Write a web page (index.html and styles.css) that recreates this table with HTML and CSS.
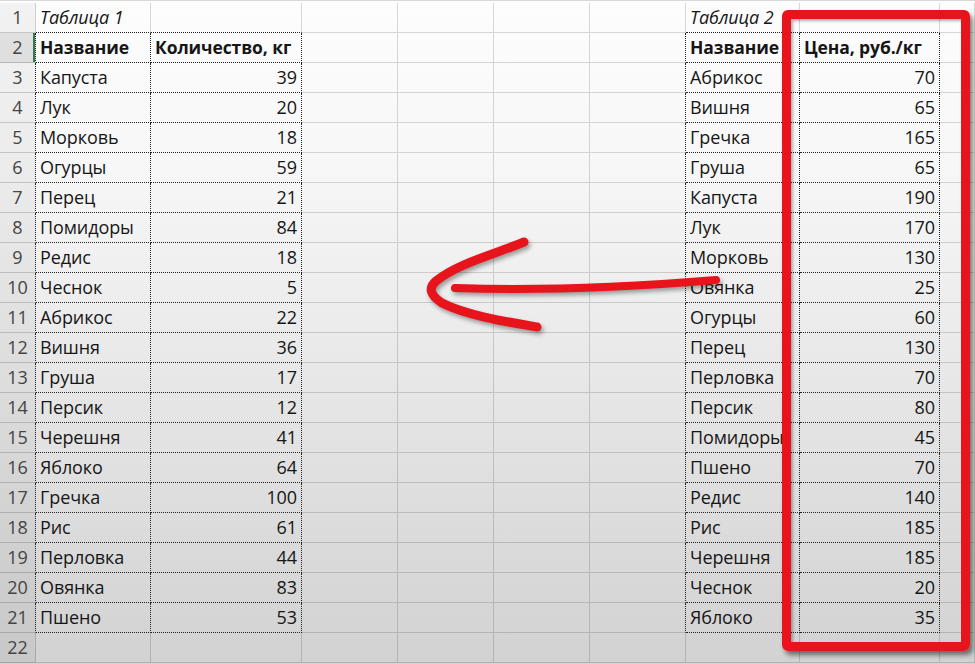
FILE: index.html
```html
<!DOCTYPE html>
<html lang="ru">
<head>
<meta charset="utf-8">
<title>Таблица</title>
<link rel="stylesheet" href="styles.css">
</head>
<body>
<div class="sheet">
  <div class="row r1"><div class="h">1</div><div class="i">Таблица 1</div><div></div><div></div><div></div><div></div><div></div><div class="i">Таблица 2</div><div></div><div></div></div>
  <div class="row tb r2"><div class="h">2</div><div class="b">Название</div><div class="b">Количество, кг</div><div></div><div></div><div></div><div></div><div class="b">Название</div><div class="b">Цена, руб./кг</div><div></div></div>
  <div class="row tb"><div class="h">3</div><div>Капуста</div><div class="n">39</div><div></div><div></div><div></div><div></div><div>Абрикос</div><div class="n">70</div><div></div></div>
  <div class="row tb"><div class="h">4</div><div>Лук</div><div class="n">20</div><div></div><div></div><div></div><div></div><div>Вишня</div><div class="n">65</div><div></div></div>
  <div class="row tb"><div class="h">5</div><div>Морковь</div><div class="n">18</div><div></div><div></div><div></div><div></div><div>Гречка</div><div class="n">165</div><div></div></div>
  <div class="row tb"><div class="h">6</div><div>Огурцы</div><div class="n">59</div><div></div><div></div><div></div><div></div><div>Груша</div><div class="n">65</div><div></div></div>
  <div class="row tb"><div class="h">7</div><div>Перец</div><div class="n">21</div><div></div><div></div><div></div><div></div><div>Капуста</div><div class="n">190</div><div></div></div>
  <div class="row tb"><div class="h">8</div><div>Помидоры</div><div class="n">84</div><div></div><div></div><div></div><div></div><div>Лук</div><div class="n">170</div><div></div></div>
  <div class="row tb"><div class="h">9</div><div>Редис</div><div class="n">18</div><div></div><div></div><div></div><div></div><div>Морковь</div><div class="n">130</div><div></div></div>
  <div class="row tb"><div class="h">10</div><div>Чеснок</div><div class="n">5</div><div></div><div></div><div></div><div></div><div>Овянка</div><div class="n">25</div><div></div></div>
  <div class="row tb"><div class="h">11</div><div>Абрикос</div><div class="n">22</div><div></div><div></div><div></div><div></div><div>Огурцы</div><div class="n">60</div><div></div></div>
  <div class="row tb"><div class="h">12</div><div>Вишня</div><div class="n">36</div><div></div><div></div><div></div><div></div><div>Перец</div><div class="n">130</div><div></div></div>
  <div class="row tb"><div class="h">13</div><div>Груша</div><div class="n">17</div><div></div><div></div><div></div><div></div><div>Перловка</div><div class="n">70</div><div></div></div>
  <div class="row tb"><div class="h">14</div><div>Персик</div><div class="n">12</div><div></div><div></div><div></div><div></div><div>Персик</div><div class="n">80</div><div></div></div>
  <div class="row tb"><div class="h">15</div><div>Черешня</div><div class="n">41</div><div></div><div></div><div></div><div></div><div>Помидоры</div><div class="n">45</div><div></div></div>
  <div class="row tb"><div class="h">16</div><div>Яблоко</div><div class="n">64</div><div></div><div></div><div></div><div></div><div>Пшено</div><div class="n">70</div><div></div></div>
  <div class="row tb"><div class="h">17</div><div>Гречка</div><div class="n">100</div><div></div><div></div><div></div><div></div><div>Редис</div><div class="n">140</div><div></div></div>
  <div class="row tb"><div class="h">18</div><div>Рис</div><div class="n">61</div><div></div><div></div><div></div><div></div><div>Рис</div><div class="n">185</div><div></div></div>
  <div class="row tb"><div class="h">19</div><div>Перловка</div><div class="n">44</div><div></div><div></div><div></div><div></div><div>Черешня</div><div class="n">185</div><div></div></div>
  <div class="row tb"><div class="h">20</div><div>Овянка</div><div class="n">83</div><div></div><div></div><div></div><div></div><div>Чеснок</div><div class="n">20</div><div></div></div>
  <div class="row tb"><div class="h">21</div><div>Пшено</div><div class="n">53</div><div></div><div></div><div></div><div></div><div>Яблоко</div><div class="n">35</div><div></div></div>
  <div class="row"><div class="h">22</div><div></div><div></div><div></div><div></div><div></div><div></div><div></div><div></div><div></div></div>

  <div class="frame"></div>
  <svg class="arrow" width="975" height="664" viewBox="0 0 975 664">
    <g fill="none" stroke="#e8141c" stroke-linecap="round" stroke-linejoin="round">
      <path d="M524 241 C498 252 458 262 436 280 C428 287 430 294 442 302 C466 314 502 320 537 326" stroke-width="9"/>
      <path d="M455 287 C540 290 630 286 716 279" stroke-width="8"/>
    </g>
  </svg>
</div>
</body>
</html>
```

FILE: styles.css
```css
* { box-sizing: border-box; }

html, body {
  margin: 0;
  padding: 0;
}

body {
  width: 975px;
  height: 664px;
  overflow: hidden;
  font-family: "Open Sans", "Noto Sans", "Liberation Sans", sans-serif;
  font-size: 18px;
  color: #161616;
  background: linear-gradient(#fdfdfd 0%, #f7f7f7 25%, #ebebeb 50%, #dedede 75%, #d2d2d2 100%);
}

.sheet {
  position: relative;
  width: 975px;
  height: 664px;
  padding-top: 2px;
  border-top: 1px solid rgba(0, 0, 0, 0.14);
}

.row {
  display: grid;
  grid-template-columns: 36px 115px 151px 96px 96px 96px 96px 114px 140px 1fr;
  height: 30px;
}

.row > div {
  border-right: 1px solid rgba(0, 0, 0, 0.15);
  border-bottom: 1px solid rgba(0, 0, 0, 0.15);
  line-height: 29px;
  padding: 0 4px 0 4px;
  white-space: nowrap;
  overflow: hidden;
  letter-spacing: -0.1px;
}

.row > .h {
  background: rgba(0, 0, 0, 0.045);
  color: #444;
  text-align: center;
  padding: 0;
  letter-spacing: 0;
  border-bottom-color: rgba(0, 0, 0, 0.17);
}

.r2 > .h {
  background: rgba(0, 0, 0, 0.11);
  box-shadow: inset -2px 0 0 #2f7a50;
}

.i { font-style: italic; }
.b { font-weight: 700; font-size: 17.5px; }
.n { text-align: right; }

/* dotted table borders */
.r1 > :nth-child(2),
.r1 > :nth-child(3),
.r1 > :nth-child(8),
.r1 > :nth-child(9) {
  border-bottom: 1px dotted #222;
}

.tb > :nth-child(1),
.tb > :nth-child(7) {
  border-right: 1px dotted #222;
}

.tb > :nth-child(2),
.tb > :nth-child(3),
.tb > :nth-child(8),
.tb > :nth-child(9) {
  border-right: 1px dotted #222;
  border-bottom: 1px dotted #222;
}

/* overlays */
.frame {
  position: absolute;
  left: 782px;
  top: 9px;
  width: 188px;
  height: 641px;
  border: 9px solid #e8141c;
  border-radius: 6px;
  box-shadow: 3px 4px 5px rgba(0, 0, 0, 0.5), inset 2px 2px 3px rgba(0, 0, 0, 0.3);
}

.arrow {
  position: absolute;
  left: 0;
  top: 0;
  pointer-events: none;
  filter: drop-shadow(2px 3px 2px rgba(0, 0, 0, 0.35));
}
```
